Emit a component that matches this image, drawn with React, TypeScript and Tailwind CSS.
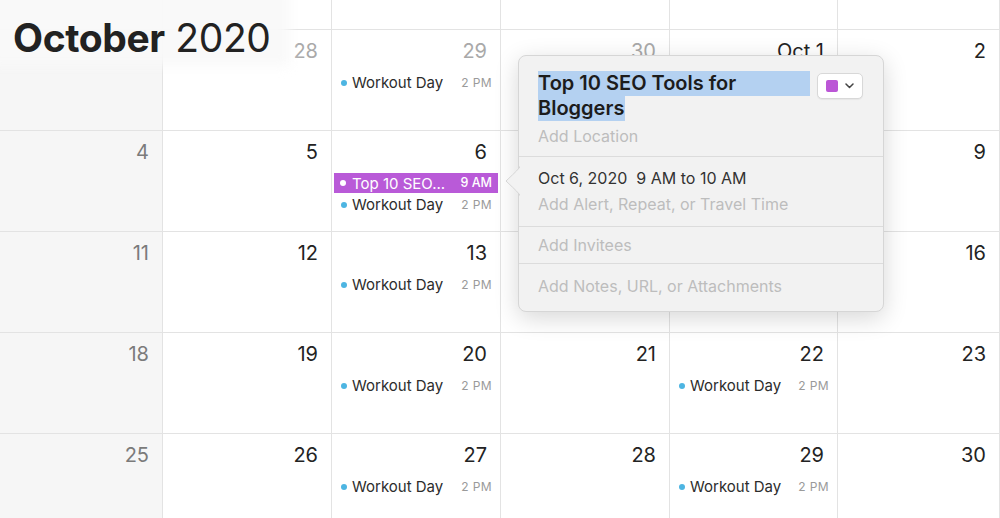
import React from "react";

type Ev = { title: string; time: string; purple?: boolean };
type Cell = { label: string; tone: "dark" | "muted" | "weekend"; events?: Ev[] };

const W: Ev = { title: "Workout Day", time: "2 PM" };
const SEO: Ev = { title: "Top 10 SEO...", time: "9 AM", purple: true };

const rows: Cell[][] = [
  [
    { label: "", tone: "weekend" },
    { label: "", tone: "muted" },
    { label: "", tone: "muted" },
    { label: "", tone: "muted" },
    { label: "", tone: "muted" },
    { label: "", tone: "muted" },
  ],
  [
    { label: "", tone: "weekend" },
    { label: "28", tone: "muted" },
    { label: "29", tone: "muted", events: [W] },
    { label: "30", tone: "muted" },
    { label: "Oct 1", tone: "dark" },
    { label: "2", tone: "dark" },
  ],
  [
    { label: "4", tone: "weekend" },
    { label: "5", tone: "dark" },
    { label: "6", tone: "dark", events: [SEO, W] },
    { label: "7", tone: "dark" },
    { label: "8", tone: "dark" },
    { label: "9", tone: "dark" },
  ],
  [
    { label: "11", tone: "weekend" },
    { label: "12", tone: "dark" },
    { label: "13", tone: "dark", events: [W] },
    { label: "14", tone: "dark" },
    { label: "15", tone: "dark" },
    { label: "16", tone: "dark" },
  ],
  [
    { label: "18", tone: "weekend" },
    { label: "19", tone: "dark" },
    { label: "20", tone: "dark", events: [W] },
    { label: "21", tone: "dark" },
    { label: "22", tone: "dark", events: [W] },
    { label: "23", tone: "dark" },
  ],
  [
    { label: "25", tone: "weekend" },
    { label: "26", tone: "dark" },
    { label: "27", tone: "dark", events: [W] },
    { label: "28", tone: "dark" },
    { label: "29", tone: "dark", events: [W] },
    { label: "30", tone: "dark" },
  ],
];

function EventRow({ ev }: { ev: Ev }) {
  if (ev.purple) {
    return (
      <div className="flex items-center h-[20px] mb-[1px] pl-[6px] pr-[6px] bg-[#b95ad8] text-white">
        <span className="w-[6px] h-[6px] rounded-full bg-white mr-[6px] shrink-0" />
        <span className="flex-1 text-[15px] leading-none whitespace-nowrap">{ev.title}</span>
        <span className="text-[12.5px] leading-none font-medium whitespace-nowrap">{ev.time}</span>
      </div>
    );
  }
  return (
    <div className="flex items-center h-[21px] pl-[7px] pr-[6px]">
      <span className="w-[6px] h-[6px] rounded-full bg-[#4db5e2] mr-[5px] shrink-0" />
      <span className="flex-1 text-[15px] leading-none text-[#2c2c2c] whitespace-nowrap">{ev.title}</span>
      <span className="text-[12px] leading-none text-[#9a9a9a] tracking-[0.4px] whitespace-nowrap">{ev.time}</span>
    </div>
  );
}

function DayCell({ cell, col }: { cell: Cell; col: number }) {
  const color =
    cell.tone === "dark" ? "text-[#232323]" : cell.tone === "muted" ? "text-[#a9a9a9]" : "text-[#7b7b7b]";
  return (
    <div
      className={
        "flex flex-col border-b border-r border-[#e3e3e3] " + (col === 0 ? "bg-[#f6f6f6]" : "bg-white")
      }
    >
      <div className={"h-[42px] flex justify-end items-start pt-[9px] pr-[13px] text-[20px] leading-[24px] " + color}>
        {cell.label}
      </div>
      <div className="flex flex-col px-[2px]">
        {(cell.events || []).map((e, i) => (
          <EventRow key={i} ev={e} />
        ))}
      </div>
    </div>
  );
}

export default function App() {
  return (
    <div
      className="relative w-[1000px] h-[518px] overflow-hidden bg-white"
      style={{ fontFamily: "Inter, 'Noto Sans', sans-serif" }}
    >
      <div className="grid grid-cols-[163px_169px_169px_169px_168px_1fr] auto-rows-[101px] -mt-[71px]">
        {rows.map((r, ri) => r.map((c, ci) => <DayCell key={ri + "-" + ci} cell={c} col={ci} />))}
      </div>

      {/* title backdrop */}
      <div className="absolute left-[-12px] top-[-12px] w-[302px] h-[78px] bg-[#f9f9f9]/95 blur-[6px]" />
      <div className="absolute left-[13px] top-[15px] text-[39px] leading-[46px] text-[#222] tracking-[-0.4px]">
        <span className="font-bold">October</span> <span className="font-normal">2020</span>
      </div>

      {/* popover */}
      <div className="absolute left-[518px] top-[55px] w-[366px] h-[257px] rounded-[8px] border border-[#d6d6d6] bg-[#f2f2f2] shadow-[0_6px_24px_rgba(0,0,0,0.16)]">
        <svg className="absolute left-[-14px] top-[110px]" width="16" height="30" viewBox="0 0 16 30">
          <path d="M15 0 L15 1 C11 6 4 12 1 15 C4 18 11 24 15 29 L15 30" fill="#f2f2f2" stroke="#d6d6d6" strokeWidth="1" />
          <rect x="15" y="0" width="2" height="30" fill="#f2f2f2" />
        </svg>
        <div className="flex flex-col">
          <div className="h-[101px] border-b border-[#dcdcdc] pl-[19px] pr-[20px] pt-[15px] flex">
            <div className="flex-1 flex flex-col">
              <div className="text-[20px] leading-[25px] font-semibold text-[#1c1c1c]">
                <div className="w-[272px] bg-[#b4d1f1]">Top 10 SEO Tools for</div>
                <div className="w-fit pr-[1px] bg-[#b4d1f1]">Bloggers</div>
              </div>
              <div className="mt-[4px] text-[16px] leading-[22px] text-[#bdbdbd]">Add Location</div>
            </div>
            <div className="mt-[2px] w-[46px] h-[26px] rounded-[5px] border border-[#d8d8d8] bg-white flex items-center justify-center gap-[7px] shadow-[0_1px_1px_rgba(0,0,0,0.05)]">
              <span className="w-[12px] h-[12px] rounded-[2px] bg-[#bb56d6]" />
              <svg width="9" height="6" viewBox="0 0 9 6">
                <path d="M1 1 L4.5 4.5 L8 1" fill="none" stroke="#444" strokeWidth="1.5" strokeLinecap="round" strokeLinejoin="round" />
              </svg>
            </div>
          </div>
          <div className="h-[70px] border-b border-[#dcdcdc] pl-[19px] pt-[8px]">
            <div className="text-[16px] leading-[26px] text-[#333]">Oct 6, 2020&nbsp;&nbsp;9 AM to 10 AM</div>
            <div className="text-[16px] leading-[26px] text-[#bdbdbd]">Add Alert, Repeat, or Travel Time</div>
          </div>
          <div className="h-[37px] border-b border-[#dcdcdc] pl-[19px] flex items-center">
            <span className="text-[16px] text-[#bdbdbd]">Add Invitees</span>
          </div>
          <div className="h-[43px] pl-[19px] flex items-center">
            <span className="text-[16px] text-[#bdbdbd]">Add Notes, URL, or Attachments</span>
          </div>
        </div>
      </div>
    </div>
  );
}
